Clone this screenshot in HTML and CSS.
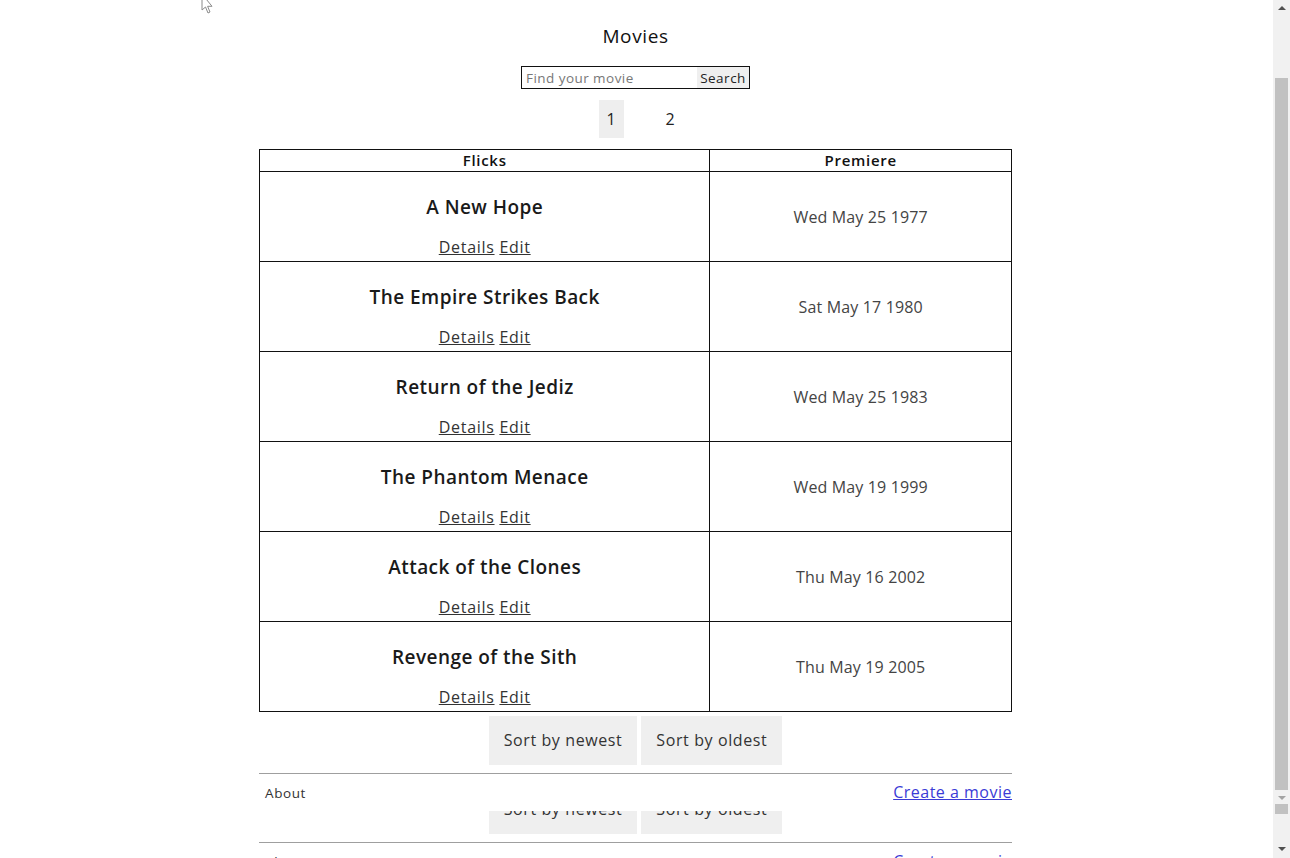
FILE: index.html
```html
<!DOCTYPE html>
<html lang="en">
<head>
<meta charset="utf-8">
<title>Movies</title>
<link rel="stylesheet" href="styles.css">
</head>
<body>
<div class="frame">
  <main class="page">
    <h1 class="title">Movies</h1>
    <form class="search">
      <input class="search-input" type="text" placeholder="Find your movie">
      <button class="search-btn" type="button">Search</button>
    </form>
    <nav class="pager">
      <span class="pg active">1</span>
      <span class="pg">2</span>
    </nav>
    <table class="movies">
      <thead>
        <tr><th class="c1">Flicks</th><th class="c2">Premiere</th></tr>
      </thead>
      <tbody>
        <tr><td class="c1"><div class="mt">A New Hope</div><div class="links"><a href="#">Details</a> <a href="#">Edit</a></div></td><td class="c2">Wed May 25 1977</td></tr>
        <tr><td class="c1"><div class="mt">The Empire Strikes Back</div><div class="links"><a href="#">Details</a> <a href="#">Edit</a></div></td><td class="c2">Sat May 17 1980</td></tr>
        <tr><td class="c1"><div class="mt">Return of the Jediz</div><div class="links"><a href="#">Details</a> <a href="#">Edit</a></div></td><td class="c2">Wed May 25 1983</td></tr>
        <tr><td class="c1"><div class="mt">The Phantom Menace</div><div class="links"><a href="#">Details</a> <a href="#">Edit</a></div></td><td class="c2">Wed May 19 1999</td></tr>
        <tr><td class="c1"><div class="mt">Attack of the Clones</div><div class="links"><a href="#">Details</a> <a href="#">Edit</a></div></td><td class="c2">Thu May 16 2002</td></tr>
        <tr><td class="c1"><div class="mt">Revenge of the Sith</div><div class="links"><a href="#">Details</a> <a href="#">Edit</a></div></td><td class="c2">Thu May 19 2005</td></tr>
      </tbody>
    </table>
    <div class="sorts">
      <button class="sort" type="button">Sort by newest</button>
      <button class="sort" type="button">Sort by oldest</button>
    </div>
    <footer class="foot">
      <span class="about">About</span>
      <a class="create" href="#">Create a movie</a>
    </footer>
    <div class="ghost" aria-hidden="true">
      <div class="ghost-inner">
        <div class="sorts">
          <span class="sort">Sort by newest</span>
          <span class="sort">Sort by oldest</span>
        </div>
        <div class="foot">
          <span class="about">About</span>
          <span class="create">Create a movie</span>
        </div>
      </div>
    </div>
  </main>
  <div class="scrollbar" aria-hidden="true">
    <div class="sb-arrow up"></div>
    <div class="sb-gap"></div>
    <div class="sb-thumb"></div>
    <div class="sb-arrow down ghost-arrow"></div>
    <div class="sb-chunk"></div>
    <div class="sb-fill"></div>
    <div class="sb-arrow down"></div>
  </div>
  <svg class="cursor" width="14" height="16" viewBox="0 0 14 16" aria-hidden="true">
    <path d="M1 -6 L1 10 L4.5 7 L7 13 L9 12 L6.6 6.3 L11 6.3 Z" fill="#fff" stroke="#8a8a8a" stroke-width="1"/>
  </svg>
</div>
</body>
</html>
```

FILE: styles.css
```css
* { box-sizing: border-box; }
html, body { margin: 0; height: 100%; overflow: hidden; background: #fff; }
body { font-family: "Open Sans", "Liberation Sans", sans-serif; color: #222; }

.frame { display: flex; height: 858px; position: relative; }
.page { flex: 1; display: flex; flex-direction: column; align-items: center; overflow: hidden; padding-right: 2px; }

.title { margin: 23px 0 0; height: 26px; line-height: 26px; font-size: 19px; font-weight: 500; color: #111; letter-spacing: 0.6px; }

.search { display: flex; margin-top: 17px; border: 1px solid #111; height: 23px; width: 229px; }
.search-input { border: none; outline: none; width: 175px; height: 21px; padding: 0 4px; font-family: inherit; font-size: 13.5px; letter-spacing: 0.45px; color: #333; background: #fff; }
.search-input::placeholder { color: #777; }
.search-btn { border: none; background: #efefef; width: 52px; height: 21px; padding: 0; font-family: inherit; font-size: 13.5px; letter-spacing: 0.5px; color: #222; }

.pager { display: flex; gap: 34px; margin-top: 11px; padding-left: 10px; }
.pg { width: 25px; height: 38px; line-height: 38px; text-align: center; font-size: 16px; color: #222; }
.pg.active { background: #eee; }

.movies { margin-top: 11px; width: 753px; border-collapse: collapse; border: 1px solid #111; }
.movies th, .movies td { border: 1px solid #111; padding: 0; text-align: center; }
.movies th { height: 22px; font-size: 15px; font-weight: 600; color: #111; line-height: 19px; letter-spacing: 0.7px; }
.movies td { height: 90px; vertical-align: top; }
.c1 { width: 451px; }
.c2 { width: 302px; }
.movies td.c2 { vertical-align: middle; font-size: 16px; color: #444; letter-spacing: 0.15px; }
.mt { margin-top: 23px; line-height: 24px; font-size: 19px; font-weight: 600; color: #1a1a1a; letter-spacing: 0.45px; }
.links { margin-top: 16px; line-height: 24px; font-size: 16px; letter-spacing: 0.7px; }
.links a { color: #333; text-decoration: underline; }

.sorts { display: flex; gap: 4px; margin-top: 4px; }
.sort { display: block; border: none; background: #efefef; height: 49px; padding: 0 15px; font-family: inherit; font-size: 16px; color: #333; line-height: 49px; letter-spacing: 0.6px; }

.foot { width: 753px; margin-top: 8px; border-top: 1px solid #9f9f9f; display: flex; justify-content: space-between; align-items: flex-start; padding: 8px 0 0 6px; height: 38px; }
.about { font-size: 13.5px; color: #333; line-height: 20px; margin-top: 1px; letter-spacing: 0.6px; }
.create { font-size: 16px; color: #3b3bd6; text-decoration: underline; line-height: 20px; letter-spacing: 0.5px; }

.ghost { height: 48px; overflow: hidden; width: 100%; display: flex; justify-content: center; }
.ghost-inner { display: flex; flex-direction: column; align-items: center; margin-top: -26px; height: max-content; }
.ghost .sorts { margin-top: 0; }

.scrollbar { width: 17px; background: #f1f1f1; display: flex; flex-direction: column; align-items: center; }
.sb-arrow { width: 17px; height: 17px; position: relative; }
.sb-arrow::after { content: ""; position: absolute; left: 5px; top: 6px; border-left: 4px solid transparent; border-right: 4px solid transparent; }
.sb-arrow.up::after { border-bottom: 4px solid #505050; }
.sb-arrow.down::after { border-top: 4px solid #505050; }
.sb-arrow.ghost-arrow::after { border-top-color: #a3a3a3; }
.sb-gap { height: 61px; }
.sb-thumb { width: 13px; height: 712px; background: #c1c1c1; }
.sb-chunk { width: 13px; height: 10px; background: #c1c1c1; margin-top: -3px; }
.sb-fill { flex: 1; }

.cursor { position: absolute; left: 201px; top: 0; }
```
